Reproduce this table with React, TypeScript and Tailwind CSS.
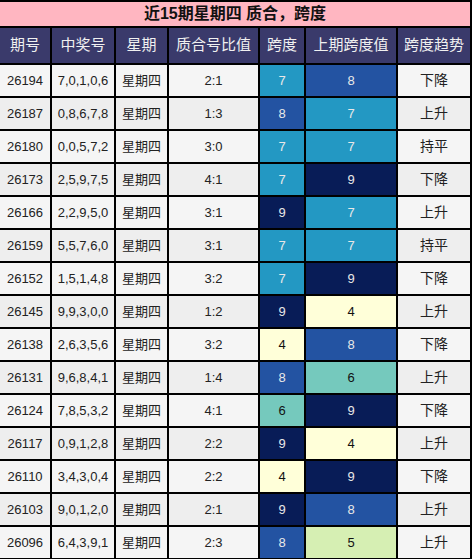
import React from 'react';

const rows: [string, string, string, number, number, string][] = [
  ['26194', '7,0,1,0,6', '2:1', 7, 8, '下降'],
  ['26187', '0,8,6,7,8', '1:3', 8, 7, '上升'],
  ['26180', '0,0,5,7,2', '3:0', 7, 7, '持平'],
  ['26173', '2,5,9,7,5', '4:1', 7, 9, '下降'],
  ['26166', '2,2,9,5,0', '3:1', 9, 7, '上升'],
  ['26159', '5,5,7,6,0', '3:1', 7, 7, '持平'],
  ['26152', '1,5,1,4,8', '3:2', 7, 9, '下降'],
  ['26145', '9,9,3,0,0', '1:2', 9, 4, '上升'],
  ['26138', '2,6,3,5,6', '3:2', 4, 8, '下降'],
  ['26131', '9,6,8,4,1', '1:4', 8, 6, '上升'],
  ['26124', '7,8,5,3,2', '4:1', 6, 9, '下降'],
  ['26117', '0,9,1,2,8', '2:2', 9, 4, '上升'],
  ['26110', '3,4,3,0,4', '2:2', 4, 9, '下降'],
  ['26103', '9,0,1,2,0', '2:1', 9, 8, '上升'],
  ['26096', '6,4,3,9,1', '2:3', 8, 5, '上升'],
];

// heat colours for span values
const spanColor: Record<number, string> = {
  4: 'bg-[#ffffd9] text-[#111]',
  5: 'bg-[#d6efb3] text-[#111]',
  6: 'bg-[#75c9bd] text-[#111]',
  7: 'bg-[#2398c3] text-[#e8e8e8]',
  8: 'bg-[#2353a2] text-[#e8e8e8]',
  9: 'bg-[#081c57] text-[#e8e8e8]',
};

const headers = ['期号', '中奖号', '星期', '质合号比值', '跨度', '上期跨度值', '跨度趋势'];

export default function App() {
  return (
    <div
      className="w-[472px] h-[559px] bg-black pt-[2px] pr-[2px] overflow-hidden"
      style={{ fontFamily: '"Liberation Sans", Arial, "Noto Sans CJK SC", sans-serif' }}
    >
      <div className="grid grid-cols-[50px_62px_51px_89px_44px_90px_72px] gap-[2px] grid-rows-[24px_35px_repeat(15,31px)]">
        <div className="col-span-7 bg-[#ffb6c1] flex items-center justify-center text-[16px] font-bold text-[#111]">
          近15期星期四 质合，跨度
        </div>
        {headers.map((h) => (
          <div key={h} className="bg-[#3a3a6b] text-[#f0f0f0] text-[15px] flex items-center justify-center">
            {h}
          </div>
        ))}
        {rows.map((r, i) => {
          const bg = i % 2 === 0 ? 'bg-[#f5f5f5]' : 'bg-[#eeeeee]';
          const cell = `${bg} text-[13px] text-[#222] flex items-center justify-center`;
          return (
            <React.Fragment key={r[0]}>
              <div className={cell}>{r[0]}</div>
              <div className={cell}>{r[1]}</div>
              <div className={cell}>星期四</div>
              <div className={cell}>{r[2]}</div>
              <div className={`${spanColor[r[3]]} text-[13px] flex items-center justify-center`}>{r[3]}</div>
              <div className={`${spanColor[r[4]]} text-[13px] flex items-center justify-center`}>{r[4]}</div>
              <div className={`${bg} text-[14px] text-[#222] flex items-center justify-center`}>{r[5]}</div>
            </React.Fragment>
          );
        })}
      </div>
    </div>
  );
}
